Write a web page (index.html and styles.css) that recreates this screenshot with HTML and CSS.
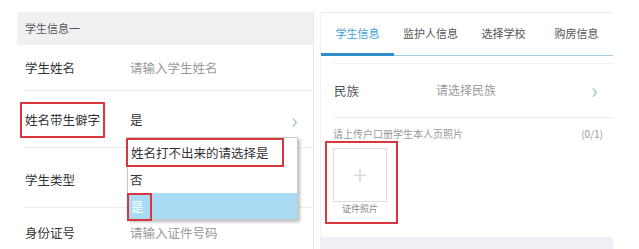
FILE: index.html
```html
<!DOCTYPE html>
<html>
    <head>
        <meta charset="utf-8">
        <title>学生信息</title>
        <link rel="stylesheet" href="styles.css">
    </head>
    <body>
        <div class="page">

            <div class="panel left">
                <div class="head">学生信息一</div>

                <div class="row r1">
                    <span class="label">学生姓名</span>
                    <span class="value hint">请输入学生姓名</span>
                </div>

                <div class="row r2">
                    <span class="label"><span class="mark">姓名带生僻字</span></span>
                    <span class="value">是</span>
                    <span class="arrow">&#8250;</span>
                </div>

                <div class="row r3">
                    <span class="label">学生类型</span>
                </div>

                <div class="row r4">
                    <span class="label">身份证号</span>
                    <span class="value hint">请输入证件号码</span>
                </div>

                <ul class="dropdown">
                    <li class="opt first"><span class="mark">姓名打不出来的请选择是</span></li>
                    <li class="opt">否</li>
                    <li class="opt active"><span class="mark">是</span></li>
                </ul>
            </div>

            <div class="panel right">
                <div class="tabs">
                    <span class="tab current">学生信息</span>
                    <span class="tab">监护人信息</span>
                    <span class="tab">选择学校</span>
                    <span class="tab">购房信息</span>
                </div>

                <div class="row nation">
                    <span class="label">民族</span>
                    <span class="value hint">请选择民族</span>
                    <span class="arrow">&#8250;</span>
                </div>

                <div class="upload">
                    <div class="upload-head">
                        <span>请上传户口册学生本人页照片</span>
                        <span>(0/1)</span>
                    </div>
                    <div class="photo">
                        <div class="box">+</div>
                        <div class="caption">证件照片</div>
                    </div>
                </div>

                <div class="foot"></div>
            </div>

        </div>
    </body>
</html>
```

FILE: styles.css
```css
html {
  background: #ffffff;
}

body {
  margin: 0;
  color: #333333;
  font: 400 12.5px/1.4 "Noto Sans CJK SC", "Noto Sans", sans-serif;
}

.page {
  display: flex;
  gap: 6px;
  padding: 12px 0 0 17px;
  height: 237px;
}

.panel {
  box-sizing: border-box;
  height: 100%;
}

/* left column */

.left {
  position: relative;
  width: 297px;
  border-right: 1px solid #e6e6e9;
}

.head {
  box-sizing: border-box;
  height: 33px;
  padding-left: 8px;
  background: #f1f1f3;
  color: #555555;
  font-size: 11px;
  line-height: 33px;
}

.row {
  box-sizing: border-box;
  display: flex;
  align-items: center;
  margin-left: 7px;
  padding-left: 1px;
  border-bottom: 1px solid #ececef;
}

.r1 { height: 46px; }
.r2 { height: 57px; padding-top: 2px; }
.r3 { height: 60px; padding-top: 4px; }
.r4 { height: 48px; border-bottom: 0; padding-top: 2px; }

.label {
  width: 105px;
  flex: none;
}

.value {
  flex: 1;
}

.hint {
  color: #9a9a9a;
}

.arrow {
  width: 22px;
  color: #a9c6d6;
  font-size: 22px;
  line-height: 1;
  margin-top: -3px;
}

.mark {
  display: inline-block;
  border: 2px solid #d9363e;
}

.r2 .mark {
  margin-left: -5px;
  padding: 7px 3px;
}

/* picker */

.dropdown {
  position: absolute;
  top: 125px;
  left: 110px;
  width: 169px;
  margin: 0;
  padding: 0;
  list-style: none;
  background: #ffffff;
  border: 1px solid #c9c9c9;
  box-shadow: 2px 2px 3px rgba(0, 0, 0, 0.25);
}

.opt {
  box-sizing: border-box;
  height: 26px;
  padding-left: 2px;
  line-height: 26px;
  color: #333333;
}

.opt.first {
  height: 29px;
}

.opt.first .mark {
  margin-left: -4px;
  padding: 0 13px 0 3px;
  line-height: 25px;
}

.opt.active {
  background: #a9dcf3;
  color: #ffffff;
}

.opt.active .mark {
  margin-left: -3px;
  padding: 0 6px 0 2px;
  line-height: 24px;
}

/* right column */

.right {
  display: flex;
  flex-direction: column;
  width: 293px;
  border-top: 1px solid #ececef;
  border-left: 1px solid #f0f0f2;
}

.tabs {
  display: flex;
  height: 42px;
  border-bottom: 1px solid #9fd0e6;
}

.tab {
  width: 73px;
  text-align: center;
  line-height: 40px;
  font-size: 11px;
  color: #555555;
}

.tab.current {
  color: #3d9fd8;
  border-bottom: 3px solid #2f8dcc;
  margin-bottom: -1px;
  line-height: 40px;
}

.nation {
  height: 55px;
  margin: 7px 0 0 12px;
  border-top: 1px solid #f1f1f3;
}

.nation .label {
  width: 102px;
  color: #555555;
}

.nation .hint {
  font-size: 12px;
}

.upload {
  flex: 1;
  padding: 9px 10px 0 4px;
}

.upload-head {
  display: flex;
  justify-content: space-between;
  padding-left: 8px;
  color: #999999;
  font-size: 10px;
}

.photo {
  display: inline-block;
  padding: 5px 9px 6px 6px;
  border: 2px solid #d9363e;
}

.box {
  box-sizing: border-box;
  width: 54px;
  height: 54px;
  border: 1px solid #dddddd;
  color: #d6d6d6;
  font-size: 26px;
  font-weight: 300;
  line-height: 50px;
  text-align: center;
}

.caption {
  margin-top: 1px;
  color: #888888;
  font-size: 9px;
  text-align: center;
}

.foot {
  height: 12px;
  background: #eef0f3;
}
```
